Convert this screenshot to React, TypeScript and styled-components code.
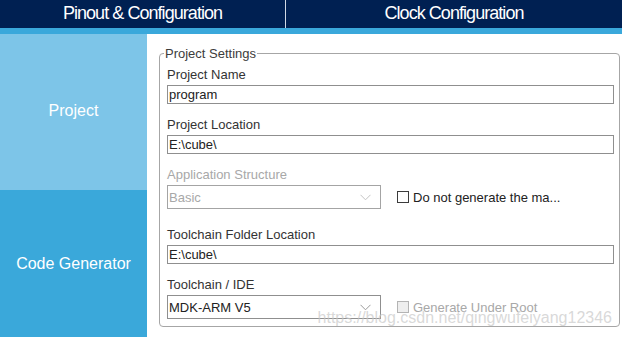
import React, { FC } from 'react';
import styled, { createGlobalStyle } from 'styled-components';

const GlobalStyle = createGlobalStyle`
  body {
    margin: 0;
    background: #ffffff;
    font-family: 'Liberation Sans', Arial, sans-serif;
  }
`;

const Chevron: FC<{ color: string }> = ({ color }) => (
  <svg width="11" height="7" viewBox="0 0 11 7">
    <path d="M0.5 0.8 L5.5 5.8 L10.5 0.8" fill="none" stroke={color} strokeWidth="1" />
  </svg>
);

const App: FC = () => {
  return (
    <Page>
      <GlobalStyle />
      <TopBar>
        <Tab $width="285px">Pinout &amp; Configuration</Tab>
        <TabDivider />
        <Tab>Clock Configuration</Tab>
      </TopBar>
      <Strip />
      <Body>
        <Sidebar>
          <SideItem $light>Project</SideItem>
          <SideItem>Code Generator</SideItem>
        </Sidebar>
        <Main>
          <Settings>
            <Legend>Project Settings</Legend>
            <Field>
              <Label>Project Name</Label>
              <TextBox>program</TextBox>
            </Field>
            <Field>
              <Label>Project Location</Label>
              <TextBox>E:\cube\</TextBox>
            </Field>
            <Field>
              <Label $disabled>Application Structure</Label>
              <Row $spaced>
                <Select $disabled>
                  <span>Basic</span>
                  <Chevron color="#c4c4c4" />
                </Select>
                <Check>
                  <Box />
                  <span>Do not generate the ma...</span>
                </Check>
              </Row>
            </Field>
            <Field>
              <Label>Toolchain Folder Location</Label>
              <TextBox>E:\cube\</TextBox>
            </Field>
            <Field>
              <Label>Toolchain / IDE</Label>
              <Row>
                <Select>
                  <span>MDK-ARM V5</span>
                  <Chevron color="#9a9a9a" />
                </Select>
                <Check $disabled>
                  <Box $disabled />
                  <span>Generate Under Root</span>
                </Check>
              </Row>
            </Field>
          </Settings>
          <Watermark>https://blog.csdn.net/qingwufeiyang12346</Watermark>
        </Main>
      </Body>
    </Page>
  );
};

export default App;

const Page = styled.div`
  width: 622px;
  height: 337px;
  overflow: hidden;
  display: flex;
  flex-direction: column;
`;

const TopBar = styled.div`
  height: 28px;
  background-color: #002052;
  display: flex;
  align-items: stretch;
`;

const Tab = styled.div<{ $width?: string }>`
  flex: ${(p) => (p.$width ? `0 0 ${p.$width}` : '1')};
  display: flex;
  align-items: center;
  justify-content: center;
  color: #ffffff;
  font-size: 18px;
  letter-spacing: -0.95px;
  padding-bottom: 1px;
`;

const TabDivider = styled.div`
  width: 1px;
  background-color: #d0d8e4;
`;

const Strip = styled.div`
  height: 6px;
  background-color: #3aa8db;
`;

const Body = styled.div`
  flex: 1;
  display: flex;
`;

const Sidebar = styled.div`
  width: 147px;
  display: flex;
  flex-direction: column;
`;

const SideItem = styled.div<{ $light?: boolean }>`
  flex: ${(p) => (p.$light ? '0 0 153px' : '1')};
  background-color: ${(p) => (p.$light ? '#7dc5e8' : '#3aa8da')};
  color: #ffffff;
  font-size: 16px;
  display: flex;
  align-items: center;
  justify-content: center;
  padding-bottom: ${(p) => (p.$light ? '3px' : '0')};
`;

const Main = styled.div`
  flex: 1;
  position: relative;
  padding: 13px 2px 0 12px;
`;

const Settings = styled.fieldset`
  margin: 0;
  padding: 8px 5px 7px 7px;
  border: 1px solid #a6a6a6;
  border-radius: 4px;
  display: flex;
  flex-direction: column;
  gap: 14px;
`;

const Legend = styled.legend`
  padding: 0 1px;
  margin-left: -3px;
  font-size: 13px;
  color: #3c3c3c;
  line-height: 13px;
`;

const Field = styled.div`
  display: flex;
  flex-direction: column;
  gap: 3px;
`;

const Label = styled.div<{ $disabled?: boolean }>`
  font-size: 13px;
  line-height: 14px;
  color: ${(p) => (p.$disabled ? '#a8a8a8' : '#333333')};
`;

const TextBox = styled.div`
  height: 19px;
  box-sizing: border-box;
  border: 1px solid #8f8f8f;
  font-size: 13px;
  color: #222222;
  padding: 0 1px;
  display: flex;
  align-items: center;
`;

const Row = styled.div<{ $spaced?: boolean }>`
  display: flex;
  align-items: center;
  gap: 16px;
  margin-bottom: ${(p) => (p.$spaced ? '5px' : '0')};
`;

const Select = styled.div<{ $disabled?: boolean }>`
  width: 214px;
  height: 24px;
  box-sizing: border-box;
  border: 1px solid ${(p) => (p.$disabled ? '#a4a4a4' : '#8f8f8f')};
  font-size: 13px;
  color: ${(p) => (p.$disabled ? '#a8a8a8' : '#222222')};
  padding: 0 9px 0 1px;
  display: flex;
  align-items: center;
  justify-content: space-between;
`;

const Check = styled.div<{ $disabled?: boolean }>`
  display: flex;
  align-items: center;
  gap: 4px;
  font-size: 13px;
  color: ${(p) => (p.$disabled ? '#a8a8a8' : '#222222')};
`;

const Box = styled.div<{ $disabled?: boolean }>`
  width: 12px;
  height: 12px;
  box-sizing: border-box;
  border: 1px solid ${(p) => (p.$disabled ? '#b4b4b4' : '#3c3c3c')};
  background-color: ${(p) => (p.$disabled ? '#eeeeee' : '#ffffff')};
`;

const Watermark = styled.div`
  position: absolute;
  right: 10px;
  bottom: 10px;
  font-size: 16px;
  color: rgba(200, 200, 200, 0.7);
  pointer-events: none;
`;
